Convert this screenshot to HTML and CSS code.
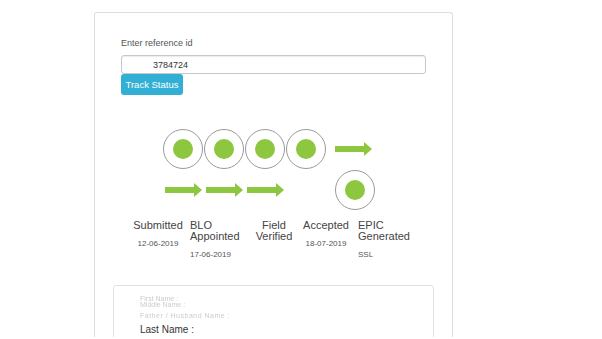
FILE: index.html
```html
<!DOCTYPE html>
<html lang="en">
<head>
    <meta charset="UTF-8">
    <meta name="viewport" content="width=device-width, initial-scale=1.0">
    <title>Track Status</title>
    <link rel="stylesheet" href="styles.css">
</head>
<body>
    <div class="main-box">
        <div class="search">
            <label class="search-label" for="refid">Enter reference id</label>
            <input type="text" id="refid" class="ref-input" value="3784724">
            <button class="track-btn">Track Status</button>
        </div>

        <div class="tracker">
            <div class="ring"><span class="dot"></span></div>
            <div class="ring"><span class="dot"></span></div>
            <div class="ring"><span class="dot"></span></div>
            <div class="ring"><span class="dot"></span></div>
            <div class="arrow"></div>

            <div class="arrow"></div>
            <div class="arrow"></div>
            <div class="arrow"></div>
            <div class="empty"></div>
            <div class="ring"><span class="dot"></span></div>
        </div>

        <div class="steps">
            <div class="step center">
                <p class="step-name">Submitted</p>
                <p class="step-date">12-06-2019</p>
            </div>
            <div class="step">
                <p class="step-name">BLO<br>Appointed</p>
                <p class="step-date">17-06-2019</p>
            </div>
            <div class="step center">
                <p class="step-name">Field<br>Verified</p>
            </div>
            <div class="step center">
                <p class="step-name">Accepted</p>
                <p class="step-date">18-07-2019</p>
            </div>
            <div class="step">
                <p class="step-name">EPIC<br>Generated</p>
                <p class="step-date">SSL</p>
            </div>
        </div>

        <div class="details">
            <p class="faded">First Name :</p>
            <p class="faded">Middle Name :</p>
            <p class="faded wide">Father / Husband Name :</p>
            <p class="detail-row">Last Name :</p>
        </div>
    </div>
</body>
</html>
```

FILE: styles.css
```css
body {
    margin: 0;
    background: white;
    font-family: 'Liberation Sans', Arial, sans-serif;
    color: #444;
}
.main-box {
    width: 321px;
    margin: 12px 0 0 94px;
    padding: 24px 18px 0;
    border: 1px solid #dedede;
    border-bottom: none;
    border-radius: 3px 3px 0 0;
    height: 300px;
}
.search {
    padding: 0 8px;
}
.search-label {
    display: block;
    font-size: 9px;
    line-height: 12px;
    color: #555;
}
.ref-input {
    display: block;
    box-sizing: border-box;
    width: 100%;
    height: 19px;
    margin-top: 6px;
    padding: 0 0 0 31px;
    border: 1px solid #c8c8c8;
    border-radius: 3px;
    box-shadow: inset 0 1px 1px rgba(0, 0, 0, 0.08);
    font-family: 'Liberation Sans', Arial, sans-serif;
    font-size: 9px;
    color: #333;
}
.track-btn {
    display: block;
    width: 62px;
    height: 21px;
    padding: 0;
    border: none;
    border-radius: 3px;
    background: #31afd4;
    color: white;
    font-family: 'Liberation Sans', Arial, sans-serif;
    font-size: 9.5px;
}
.tracker {
    display: grid;
    grid-template-columns: 41px 41px 41px 49px 40px;
    grid-template-rows: 40px 40px;
    row-gap: 1px;
    align-items: center;
    margin: 34px 0 0 50px;
}
.ring {
    box-sizing: border-box;
    width: 40px;
    height: 40px;
    border: 1.5px solid #9a9a9a;
    border-radius: 50%;
    display: flex;
    align-items: center;
    justify-content: center;
}
.dot {
    width: 20px;
    height: 20px;
    border-radius: 50%;
    background: #8dc63f;
}
.arrow {
    position: relative;
    width: 37px;
    height: 14px;
    justify-self: center;
}
.arrow::before {
    content: "";
    position: absolute;
    left: 0;
    top: 4px;
    width: 29px;
    height: 6px;
    background: #8dc63f;
}
.arrow::after {
    content: "";
    position: absolute;
    right: 0;
    top: 0;
    border-top: 7px solid transparent;
    border-bottom: 7px solid transparent;
    border-left: 8px solid #8dc63f;
}
.tracker > .arrow:nth-child(5) {
    justify-self: start;
}
.steps {
    display: grid;
    grid-template-columns: 56px 64px 48px 56px 60px;
    margin: 10px 0 0 17px;
}
.step p {
    margin: 0;
}
.step {
    padding-left: 4px;
}
.step.center {
    padding-left: 0;
    text-align: center;
}
.step-name {
    font-size: 11px;
    line-height: 11px;
    color: #444;
}
.step-date {
    margin-top: 8px !important;
    font-size: 8px;
    line-height: 10px;
    color: #555;
}
.details {
    margin-top: 25px;
    padding: 10px 26px;
    border: 1px solid #e2e2e2;
    border-radius: 3px;
}
.details p {
    margin: 0;
}
.faded {
    font-size: 7px;
    line-height: 6px;
    color: #ccc;
    filter: blur(0.6px);
}
.faded.wide {
    margin-top: 5px;
    letter-spacing: 0.5px;
}
.detail-row {
    margin-top: 5px !important;
    font-size: 10px;
    line-height: 12px;
    color: #333;
}
```
